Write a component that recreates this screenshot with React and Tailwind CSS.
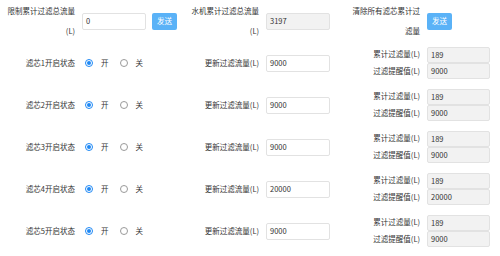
import React from 'react';

const font = { fontFamily: '"Noto Sans CJK SC", "Noto Sans", sans-serif' };

const filters = [
  { id: 1, update: '9000', total: '189', remind: '9000' },
  { id: 2, update: '9000', total: '189', remind: '9000' },
  { id: 3, update: '9000', total: '189', remind: '9000' },
  { id: 4, update: '20000', total: '189', remind: '20000' },
  { id: 5, update: '9000', total: '189', remind: '9000' },
];

function Input({ value, gray, className = '' }) {
  return (
    <div
      className={`flex items-center rounded-[2px] border border-[#e2e2e2] pl-[3px] text-[7.5px] text-[#333] ${
        gray ? 'bg-[#f2f2f2]' : 'bg-white'
      } ${className}`}
    >
      {value}
    </div>
  );
}

function SendButton() {
  return (
    <div className="flex h-[17px] w-[25px] items-center justify-center rounded-[2px] bg-[#5ab2f7] text-[7.5px] text-white">
      发送
    </div>
  );
}

function Radio({ checked, label }) {
  return (
    <div className="flex items-center">
      {checked ? (
        <span className="flex h-[8px] w-[8px] items-center justify-center rounded-full border border-[#1e88f5] bg-white">
          <span className="h-[4px] w-[4px] rounded-full bg-[#1e88f5]" />
        </span>
      ) : (
        <span className="h-[8px] w-[8px] rounded-full border border-[#9a9a9a] bg-white" />
      )}
      <span className="ml-[8px] text-[7.5px] text-[#333]">{label}</span>
    </div>
  );
}

function Label({ children }) {
  return (
    <div className="pr-[7px] text-right text-[7.5px] leading-[20px] text-[#333]">{children}</div>
  );
}

export default function App() {
  return (
    <div className="h-[256px] w-[500px] bg-white" style={font}>
      <div className="grid grid-cols-[82px_108px_76px_83px_78px_73px] auto-rows-[42px] items-center">
        <Label>限制累计过滤总流量(L)</Label>
        <div className="flex items-center">
          <Input value="0" className="h-[17px] w-[64px]" />
          <div className="ml-[6px]">
            <SendButton />
          </div>
        </div>
        <Label>水机累计过滤总流量(L)</Label>
        <Input value="3197" gray className="h-[17px] w-[64px]" />
        <Label>清除所有滤芯累计过滤量</Label>
        <SendButton />

        {filters.map((f) => (
          <React.Fragment key={f.id}>
            <Label>滤芯{f.id}开启状态</Label>
            <div className="flex items-center gap-[11px] pl-[3px]">
              <Radio checked label="开" />
              <Radio label="关" />
            </div>
            <Label>更新过滤流量(L)</Label>
            <Input value={f.update} className="h-[17px] w-[64px]" />
            <div className="flex flex-col pr-[7px] text-right text-[7.5px] text-[#333]">
              <div className="leading-[16px]">累计过滤量(L)</div>
              <div className="leading-[18px]">过滤提醒值(L)</div>
            </div>
            <div className="flex flex-col">
              <Input value={f.total} gray className="h-[16px] w-[63px]" />
              <Input value={f.remind} gray className="h-[16px] w-[63px]" />
            </div>
          </React.Fragment>
        ))}
      </div>
    </div>
  );
}
